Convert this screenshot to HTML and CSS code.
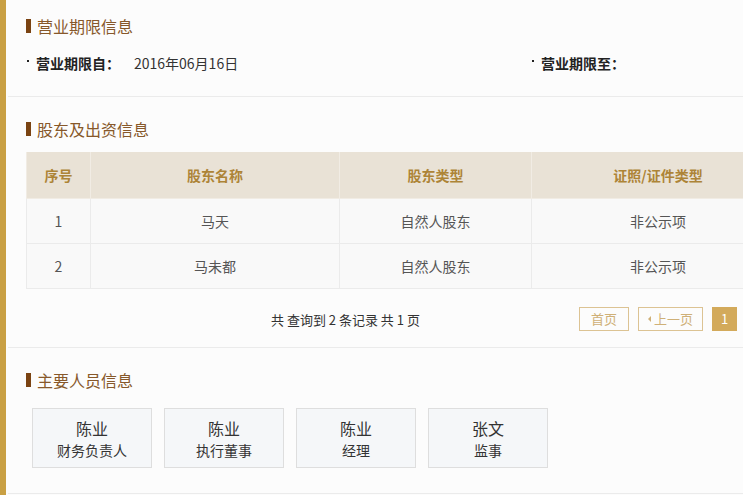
FILE: index.html
```html
<!DOCTYPE html>
<html lang="zh-CN">
<head>
<meta charset="utf-8">
<title>企业信息</title>
<link rel="stylesheet" href="styles.css">
</head>
<body>
<div class="page">
  <section class="sec sec-first">
    <h2 class="sec-title"><span class="bar"></span>营业期限信息</h2>
    <div class="term-row">
      <div class="term term-a"><span class="dot"></span><span class="term-label">营业期限自：</span><span class="term-value">2016年06月16日</span></div>
      <div class="term"><span class="dot"></span><span class="term-label">营业期限至：</span><span class="term-value"></span></div>
    </div>
  </section>

  <section class="sec sec-mid">
    <h2 class="sec-title"><span class="bar"></span>股东及出资信息</h2>
    <table class="grid">
      <thead>
        <tr><th class="c1">序号</th><th class="c2">股东名称</th><th class="c3">股东类型</th><th class="c4">证照/证件类型</th></tr>
      </thead>
      <tbody>
        <tr><td>1</td><td>马天</td><td>自然人股东</td><td>非公示项</td></tr>
        <tr><td>2</td><td>马未都</td><td>自然人股东</td><td>非公示项</td></tr>
      </tbody>
    </table>
    <div class="pager">
      <span class="pager-info">共 查询到 2 条记录 共 1 页</span>
      <div class="pager-btns">
        <span class="pbtn pbtn-first">首页</span>
        <span class="pbtn pbtn-prev"><span class="tri"></span>上一页</span>
        <span class="pbtn pbtn-on">1</span>
      </div>
    </div>
  </section>

  <section class="sec sec-last">
    <h2 class="sec-title"><span class="bar"></span>主要人员信息</h2>
    <div class="cards">
      <div class="card"><div class="card-name">陈业</div><div class="card-role">财务负责人</div></div>
      <div class="card"><div class="card-name">陈业</div><div class="card-role">执行董事</div></div>
      <div class="card"><div class="card-name">陈业</div><div class="card-role">经理</div></div>
      <div class="card"><div class="card-name">张文</div><div class="card-role">监事</div></div>
    </div>
  </section>
</div>
</body>
</html>
```

FILE: styles.css
```css
html, body {
  margin: 0;
  padding: 0;
  background: #fcfcfc;
  overflow: hidden;
}
body {
  font-family: "Noto Sans CJK SC", "Microsoft YaHei", sans-serif;
  color: #333;
  font-size: 14px;
}
.page {
  width: 900px;
  height: 495px;
  border-left: 6px solid #c9a044;
  box-sizing: border-box;
  padding-left: 2px;
}
.sec {
  border-bottom: 1px solid #ebebeb;
  padding-left: 18px;
}
.sec-first { padding-top: 15px; padding-bottom: 22px; }
.sec-mid { padding-top: 21px; padding-bottom: 16px; }
.sec-last { padding-top: 21px; padding-bottom: 25px; }

.sec-title {
  margin: 0;
  display: flex;
  align-items: center;
  font-size: 16px;
  font-weight: normal;
  line-height: 22px;
  height: 22px;
  color: #87582a;
}
.bar {
  display: inline-block;
  width: 5px;
  height: 14px;
  background: #7a4312;
  margin-right: 6px;
}

.term-row {
  display: flex;
  margin-top: 15px;
  line-height: 22px;
}
.term { display: flex; align-items: center; }
.term-a { width: 505px; }
.dot {
  width: 2px;
  height: 2px;
  background: #222;
  margin-left: 1px;
  margin-right: 7px;
  margin-top: -4px;
}
.term-label { font-weight: bold; width: 98px; color: #222; }
.term-value { color: #333; }

.grid {
  margin-top: 12px;
  border-collapse: collapse;
  table-layout: fixed;
  width: 757px;
}
.grid th, .grid td {
  text-align: center;
  border: 1px solid #ebebeb;
  padding: 0;
}
.grid th {
  height: 46px;
  background: #e9e2d6;
  color: #ad8437;
  font-weight: bold;
  font-size: 14px;
  border-color: #f1ece4;
  border-top: none;
}
.grid td {
  height: 44px;
  background: #f9f9f9;
  color: #555;
}
.c1 { width: 63px; }
.c2 { width: 248px; }
.c3 { width: 191px; }
.c4 { width: 252px; }

.pager {
  display: flex;
  align-items: center;
  margin-top: 18px;
  height: 24px;
}
.pager-info {
  margin-left: 245px;
  font-size: 13px;
  color: #333;
  width: 308px;
}
.pager-btns { display: flex; gap: 9px; }
.pbtn {
  box-sizing: border-box;
  height: 24px;
  line-height: 22px;
  border: 1px solid #dcc393;
  color: #cfb077;
  font-size: 13px;
  text-align: center;
  display: flex;
  align-items: center;
  justify-content: center;
}
.pbtn-first { width: 50px; }
.pbtn-prev { width: 65px; }
.pbtn-on { width: 25px; background: #d3aa5b; border-color: #d3aa5b; color: #fff; }
.tri {
  width: 0; height: 0;
  border-top: 3px solid transparent;
  border-bottom: 3px solid transparent;
  border-right: 3px solid #cfb077;
  margin-right: 3px;
}

.cards {
  display: flex;
  gap: 12px;
  margin-top: 17px;
  margin-left: 6px;
}
.card {
  box-sizing: border-box;
  width: 120px;
  height: 60px;
  background: #f5f7f9;
  border: 1px solid #dedede;
  text-align: center;
  padding-top: 8px;
}
.card-name { font-size: 16px; line-height: 22px; color: #333; }
.card-role { font-size: 14px; line-height: 22px; color: #333; }
```
